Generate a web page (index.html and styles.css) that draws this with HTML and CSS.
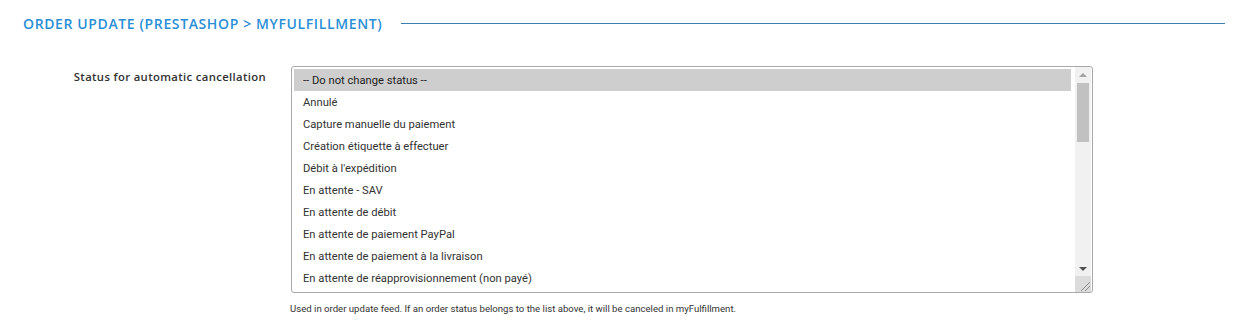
FILE: index.html
```html
<!DOCTYPE html>
<html>
<head>
<meta charset="utf-8">
<link rel="stylesheet" href="styles.css">
</head>
<body>
<div class="panel">
  <div class="heading">
    <h3 class="title">ORDER UPDATE (PRESTASHOP &gt; MYFULFILLMENT)</h3>
    <div class="rule"></div>
  </div>
  <div class="row">
    <label class="label">Status for automatic cancellation</label>
    <div class="field">
      <div class="listbox">
        <div class="options">
          <div class="opt selected">-- Do not change status --</div>
          <div class="opt">Annulé</div>
          <div class="opt">Capture manuelle du paiement</div>
          <div class="opt">Création étiquette à effectuer</div>
          <div class="opt">Débit à l'expédition</div>
          <div class="opt">En attente - SAV</div>
          <div class="opt">En attente de débit</div>
          <div class="opt">En attente de paiement PayPal</div>
          <div class="opt">En attente de paiement à la livraison</div>
          <div class="opt">En attente de réapprovisionnement (non payé)</div>
        </div>
        <div class="scrollbar">
          <div class="arrow up"></div>
          <div class="track"><div class="thumb"></div></div>
          <div class="arrow down"></div>
          <div class="grip">
            <svg width="14" height="14" viewBox="0 0 14 14"><path d="M4 13 L13 4 M8 13 L13 8" stroke="#8a8a8a" stroke-width="1" fill="none"/></svg>
          </div>
        </div>
      </div>
      <p class="help">Used in order update feed. If an order status belongs to the list above, it will be canceled in myFulfillment.</p>
    </div>
  </div>
</div>
</body>
</html>
```
FILE: styles.css
```css
html, body {
  margin: 0;
  padding: 0;
  background: #fff;
}
body {
  font-family: Roboto, "Liberation Sans", sans-serif;
  color: #333;
}
.panel {
  padding: 11px 8px 0 23px;
}
.heading {
  display: flex;
  align-items: center;
  height: 24px;
}
.title {
  margin: 0;
  font-family: "Open Sans", "Liberation Sans", sans-serif;
  font-weight: 600;
  font-size: 14px;
  letter-spacing: 0.62px;
  color: #2a8fd6;
  white-space: nowrap;
}
.rule {
  flex: 1;
  height: 1px;
  background: #3a7fb0;
  margin-left: 19px;
}
.row {
  display: flex;
  margin-top: 31px;
}
.label {
  width: 243px;
  text-align: right;
  font-family: "Open Sans", "Liberation Sans", sans-serif;
  font-weight: 600;
  font-size: 11.3px;
  letter-spacing: 0.35px;
  color: #333;
  padding-top: 3px;
}
.field {
  margin-left: 25px;
  width: 802px;
}
.listbox {
  display: flex;
  border: 1px solid #a9a9a9;
  border-radius: 3px;
  height: 227px;
  box-sizing: border-box;
  padding: 2px 1px 2px 2px;
  overflow: hidden;
}
.options {
  flex: 1;
  margin-right: 4px;
}
.opt {
  height: 22px;
  line-height: 23px;
  padding-left: 9px;
  font-size: 11.2px;
  color: #333;
  white-space: nowrap;
}
.opt.selected {
  background: #cecece;
  color: #222;
}
.scrollbar {
  width: 16px;
  margin-top: -2px;
  margin-bottom: -2px;
  background: #f1f1f1;
  display: flex;
  flex-direction: column;
}
.arrow {
  height: 14px;
  display: flex;
  align-items: center;
  justify-content: center;
}
.arrow.up::before {
  content: "";
  border-left: 4px solid transparent;
  border-right: 4px solid transparent;
  border-bottom: 4px solid #a3a3a3;
}
.arrow.down::before {
  content: "";
  border-left: 4px solid transparent;
  border-right: 4px solid transparent;
  border-top: 4px solid #505050;
}
.arrow.up {
  height: 16px;
}
.track {
  flex: 1;
  padding: 0 2px;
}
.thumb {
  height: 59px;
  background: #c1c1c1;
}
.grip {
  height: 16px;
  background: #dcdcdc;
  display: flex;
  align-items: flex-end;
  justify-content: flex-end;
}
.grip svg {
  display: block;
}
.help {
  margin: 10px 0 0 -1px;
  font-size: 9.6px;
  color: #333;
}
```
